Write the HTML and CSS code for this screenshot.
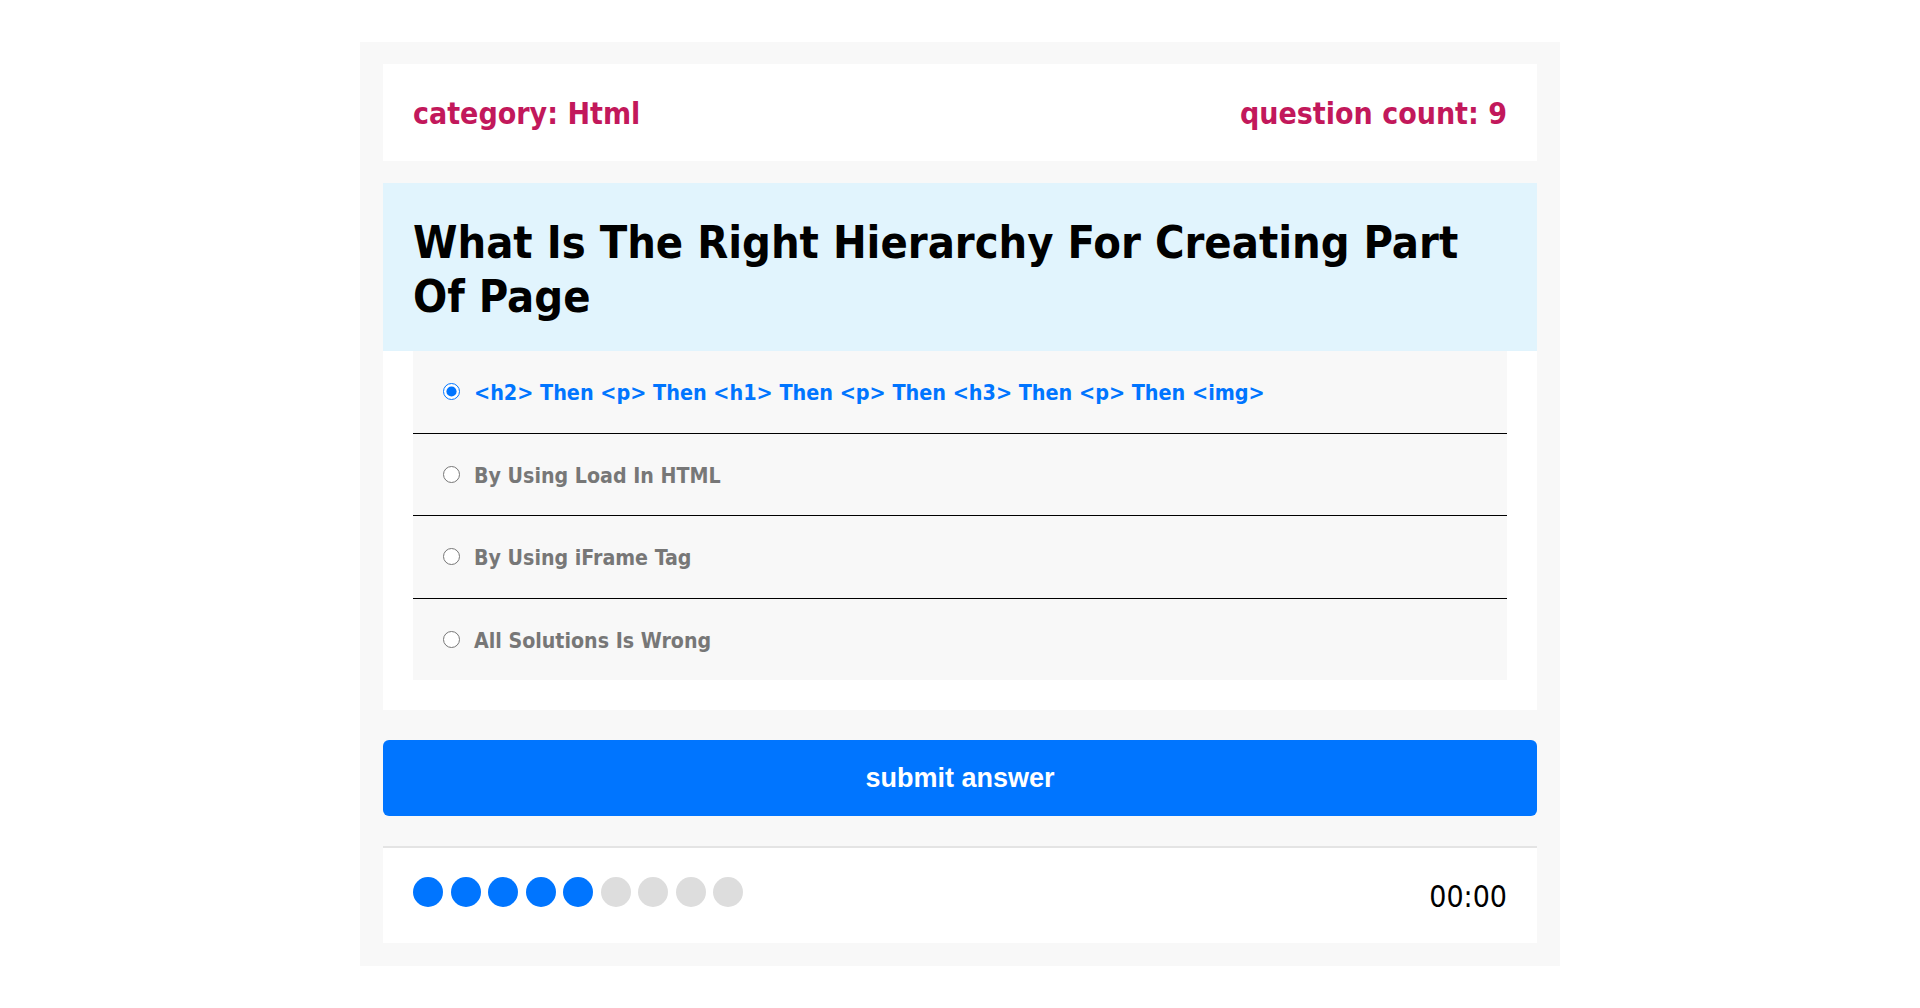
FILE: index.html
```html
<!DOCTYPE html>
<html lang="en">
<head>
<meta charset="utf-8">
<title>Quiz App</title>
<link rel="stylesheet" href="styles.css">
</head>
<body>
<div class="quiz-app">
  <div class="quiz-info">
    <div class="category">category: <span>Html</span></div>
    <div class="count">question count: <span>9</span></div>
  </div>
  <div class="quiz-area">
    <h2 class="question">What Is The Right Hierarchy For Creating Part Of Page</h2>
    <div class="answers">
      <div class="answer checked">
        <input type="radio" name="q" id="a1" checked>
        <label for="a1">&lt;h2&gt; Then &lt;p&gt; Then &lt;h1&gt; Then &lt;p&gt; Then &lt;h3&gt; Then &lt;p&gt; Then &lt;img&gt;</label>
      </div>
      <div class="answer">
        <input type="radio" name="q" id="a2">
        <label for="a2">By Using Load In HTML</label>
      </div>
      <div class="answer">
        <input type="radio" name="q" id="a3">
        <label for="a3">By Using iFrame Tag</label>
      </div>
      <div class="answer">
        <input type="radio" name="q" id="a4">
        <label for="a4">All Solutions Is Wrong</label>
      </div>
    </div>
  </div>
  <button class="submit">submit answer</button>
  <div class="bullets">
    <div class="spans">
      <span class="on"></span><span class="on"></span><span class="on"></span><span class="on"></span><span class="on"></span><span></span><span></span><span></span><span></span>
    </div>
    <div class="countdown">00:00</div>
  </div>
</div>
</body>
</html>
```
FILE: styles.css
```css
* { box-sizing: border-box; }
body {
  margin: 0;
  background: #fff;
  font-family: "DejaVu Sans Condensed", "DejaVu Sans", sans-serif;
}
.quiz-app {
  width: 1200px;
  margin: 42px auto 0;
  background: #f8f8f8;
  padding: 22px 23px 23px;
}
.quiz-info {
  display: flex;
  justify-content: space-between;
  align-items: center;
  background: #fff;
  height: 97px;
  padding: 2px 30px 0;
  font-weight: bold;
  font-size: 30px;
  color: #c2185b;
}
.quiz-area {
  margin-top: 22px;
  background: #fff;
  padding-bottom: 30px;
}
.question {
  margin: 0;
  background: #e1f4fd;
  padding: 33px 30px 27px;
  font-size: 44.8px;
  line-height: 54px;
  color: #000;
  font-weight: bold;
}
.answers {
  margin: 0 30px;
  background: #f8f8f8;
}
.answer {
  display: flex;
  align-items: center;
  height: 82.5px;
  padding: 0 25px;
  border-bottom: 1px solid #000;
}
.answer:last-child {
  border-bottom: none;
  height: 81.5px;
}
.answer input {
  width: 17px;
  height: 17px;
  margin: 0 14px 0 5px;
}
.answer label {
  font-size: 21.2px;
  font-weight: bold;
  color: #777;
  padding-top: 2px;
}
.answer.checked label {
  color: #0075ff;
  font-size: 21.4px;
}
.submit {
  display: block;
  width: 100%;
  height: 76px;
  margin-top: 30px;
  border: none;
  border-radius: 6px;
  background: #0075ff;
  color: #fff;
  font-family: "Liberation Sans", Arial, sans-serif;
  font-weight: bold;
  font-size: 27px;
}
.bullets {
  margin-top: 30px;
  background: #fff;
  border-top: 2px solid #e4e4e4;
  height: 97px;
  padding: 29px 30px 0;
  display: flex;
  justify-content: space-between;
  align-items: flex-start;
}
.spans {
  display: flex;
  gap: 7.5px;
}
.spans span {
  width: 30px;
  height: 30px;
  border-radius: 50%;
  background: #ddd;
}
.spans span.on {
  background: #0075ff;
}
.countdown {
  font-size: 30px;
  line-height: 35px;
  color: #000;
  padding-top: 2px;
}
```
